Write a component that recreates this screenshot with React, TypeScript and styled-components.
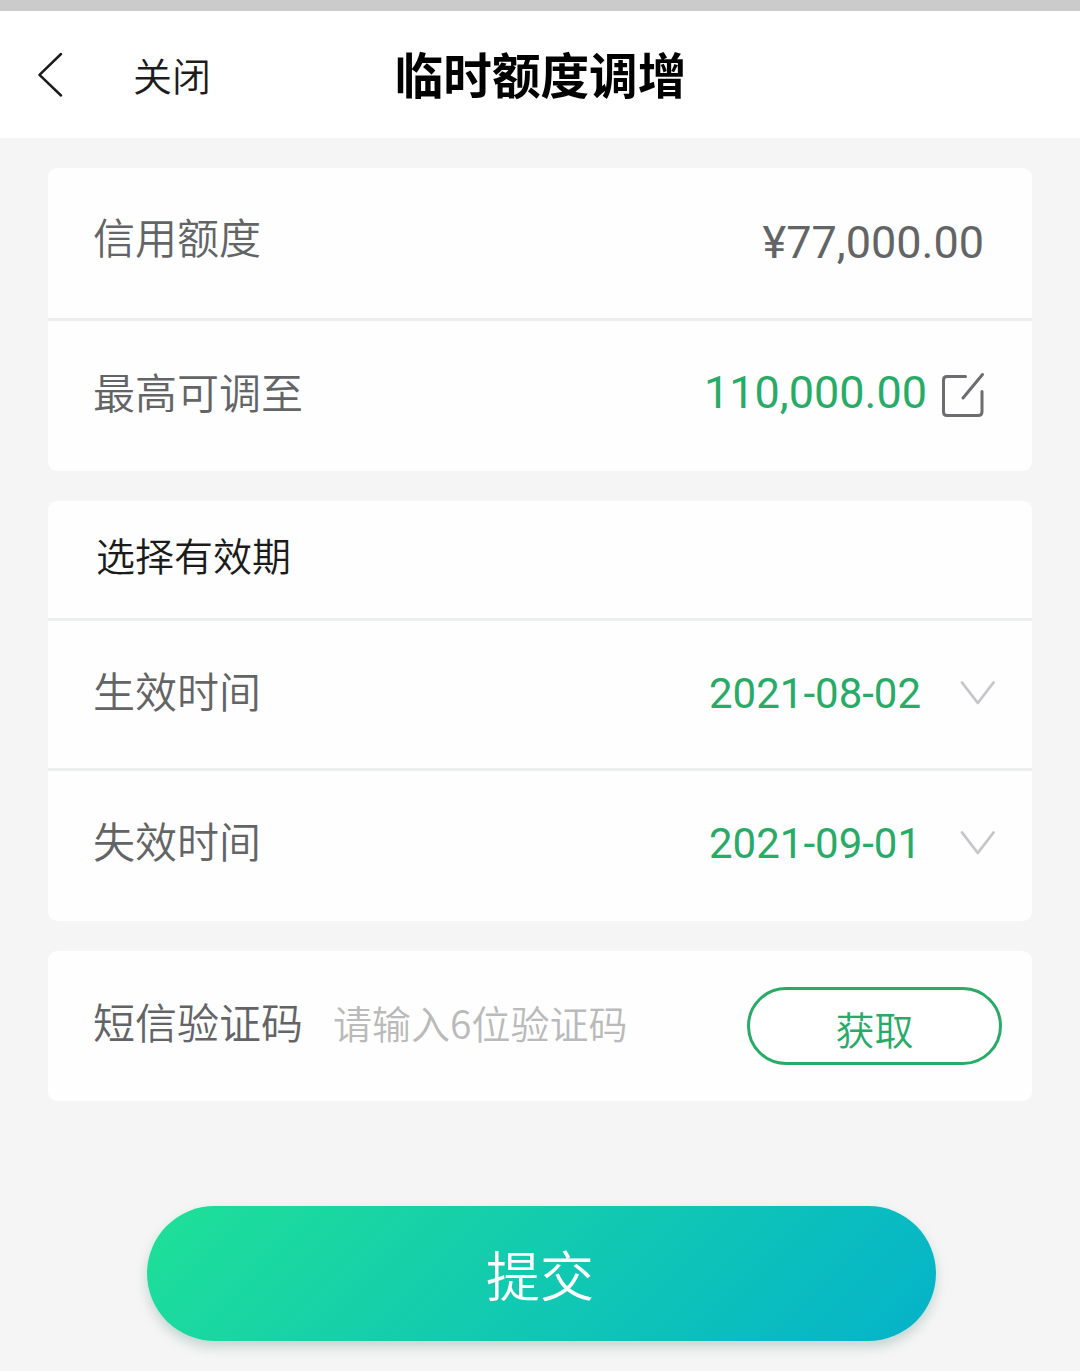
import React from "react";
import styled, { createGlobalStyle } from "styled-components";

const GlobalStyle = createGlobalStyle`
  * { box-sizing: border-box; }
  body {
    margin: 0;
    background: #f5f5f5;
    font-family: Roboto, "Noto Sans CJK SC", sans-serif;
  }
  button, input { font-family: inherit; }
`;

const Page = styled.div`
  min-height: 1371px;
  overflow: hidden;
  background: #f5f5f5;
`;

const StatusStrip = styled.div`
  height: 11px;
  background: #cbcbcb;
`;

const Header = styled.header`
  display: grid;
  grid-template-columns: 1fr auto 1fr;
  align-items: center;
  height: 127px;
  padding: 0 36px;
  background: #fff;
`;

const HeaderActions = styled.div`
  display: flex;
  align-items: center;
  gap: 69px;
`;

const IconButton = styled.button`
  display: flex;
  padding: 0;
  border: 0;
  background: none;
`;

const CloseButton = styled.button`
  padding: 6px 0 0;
  border: 0;
  background: none;
  color: #1c1c1c;
  font-size: 39px;
  font-weight: 350;
  line-height: 56px;
`;

const Title = styled.h1`
  margin: 0;
  padding: 6px 0 0 1px;
  color: #000;
  font-size: 48.6px;
  font-weight: 700;
  line-height: 70px;
`;

const Content = styled.main`
  display: flex;
  flex-direction: column;
  gap: 30px;
  padding: 30px 48px 0;
`;

const Card = styled.section`
  overflow: hidden;
  border-radius: 9px;
  background: #fefefe;
`;

const Row = styled.div<{ $height?: number; $end?: number; $lift?: number }>`
  display: flex;
  align-items: center;
  height: ${({ $height = 150 }) => $height}px;
  padding: 0 ${({ $end = 48 }) => $end}px ${({ $lift = 0 }) => $lift}px 45px;

  & + & {
    border-top: 3px solid #eceeee;
  }
`;

const Label = styled.span<{ $lift?: number; $drop?: number }>`
  padding: ${({ $drop = 0 }) => $drop}px 0 ${({ $lift = 0 }) => $lift}px;
  color: #626466;
  font-size: 42px;
  font-weight: 350;
  line-height: 60px;
`;

const SectionTitle = styled.h2`
  margin: 0;
  padding: 0 0 3px 3px;
  color: #1b1b1b;
  font-size: 39px;
  font-weight: 350;
  line-height: 56px;
`;

const Amount = styled.span<{ $active?: boolean }>`
  margin-left: auto;
  padding-bottom: ${({ $active }) => ($active ? 6 : 0)}px;
  color: ${({ $active }) => ($active ? "#27ab67" : "#626466")};
  font-size: 45px;
  line-height: 54px;
`;

const DateValue = styled.span`
  width: 251px;
  margin-left: auto;
  padding-top: 2px;
  color: #27ab67;
  font-size: 42px;
  line-height: 50px;
`;

const CodeInput = styled.input`
  flex: 1;
  min-width: 0;
  margin-left: 30px;
  padding: 0 0 9px;
  border: 0;
  outline: 0;
  background: none;
  font-family: "Noto Sans CJK SC", sans-serif;
  font-size: 39px;
  font-weight: 350;
  line-height: 56px;

  &::placeholder {
    color: #bababa;
    opacity: 1;
  }
`;

const CodeButton = styled.button`
  width: 255px;
  height: 78px;
  padding: 11px 0 0;
  border: 3px solid #27ab67;
  border-radius: 39px;
  background: #fff;
  color: #27ab67;
  font-size: 39px;
  font-weight: 350;
  line-height: 56px;
`;

const SubmitButton = styled.button`
  width: 789px;
  height: 135px;
  margin: 75px 0 0 99px;
  padding: 11px 3px 0 0;
  border: 0;
  border-radius: 68px;
  background: linear-gradient(135deg, #1fe097 0%, #04b3ca 100%);
  box-shadow: 0 6px 12px rgba(50, 120, 105, 0.25);
  color: #fff;
  font-size: 54px;
  font-weight: 350;
  line-height: 78px;
`;

const BackIcon = () => (
  <svg width="28" height="46" viewBox="0 0 28 46" fill="none" stroke="#1b1b1b" strokeWidth="2.5" strokeLinecap="round" strokeLinejoin="round">
    <path d="M25 2 3.5 22.8 25 43.5" />
  </svg>
);

const EditSvg = styled.svg`
  flex: none;
  margin: 0 0 2px 13px;
`;

const EditIcon = () => (
  <EditSvg width="46" height="46" viewBox="0 0 46 46" fill="none" stroke="#6b6d70" strokeWidth="3" strokeLinecap="round" strokeLinejoin="round">
    <path d="M25.5 4.5H7Q3.5 4.5 3.5 8V40Q3.5 43.5 7 43.5H38Q42 43.5 42 40V19.5" />
    <path d="M42.5 2.5 23 26" />
  </EditSvg>
);

const ChevronSvg = styled.svg`
  flex: none;
`;

const ChevronIcon = () => (
  <ChevronSvg width="36" height="26" viewBox="0 0 36 26" fill="none" stroke="#c5c6ca" strokeWidth="2.8" strokeLinecap="round" strokeLinejoin="round">
    <path d="M2 2.5 17.8 23 33.5 2.5" />
  </ChevronSvg>
);

export default function App() {
  return (
    <>
      <GlobalStyle />
      <Page>
        <StatusStrip />
        <Header>
          <HeaderActions>
            <IconButton aria-label="返回">
              <BackIcon />
            </IconButton>
            <CloseButton>关闭</CloseButton>
          </HeaderActions>
          <Title>临时额度调增</Title>
        </Header>
        <Content>
          <Card>
            <Row>
              <Label $lift={6}>信用额度</Label>
              <Amount>¥77,000.00</Amount>
            </Row>
            <Row $height={153} $end={46}>
              <Label $lift={3}>最高可调至</Label>
              <Amount $active>110,000.00</Amount>
              <EditIcon />
            </Row>
          </Card>
          <Card>
            <Row $height={117}>
              <SectionTitle>选择有效期</SectionTitle>
            </Row>
            <Row $end={36} $lift={4}>
              <Label $drop={2}>生效时间</Label>
              <DateValue>2021-08-02</DateValue>
              <ChevronIcon />
            </Row>
            <Row $height={153} $end={36} $lift={6}>
              <Label $drop={2}>失效时间</Label>
              <DateValue>2021-09-01</DateValue>
              <ChevronIcon />
            </Row>
          </Card>
          <Card>
            <Row $end={30}>
              <Label $lift={2}>短信验证码</Label>
              <CodeInput placeholder="请输入6位验证码" />
              <CodeButton>获取</CodeButton>
            </Row>
          </Card>
          <SubmitButton>提交</SubmitButton>
        </Content>
      </Page>
    </>
  );
}
